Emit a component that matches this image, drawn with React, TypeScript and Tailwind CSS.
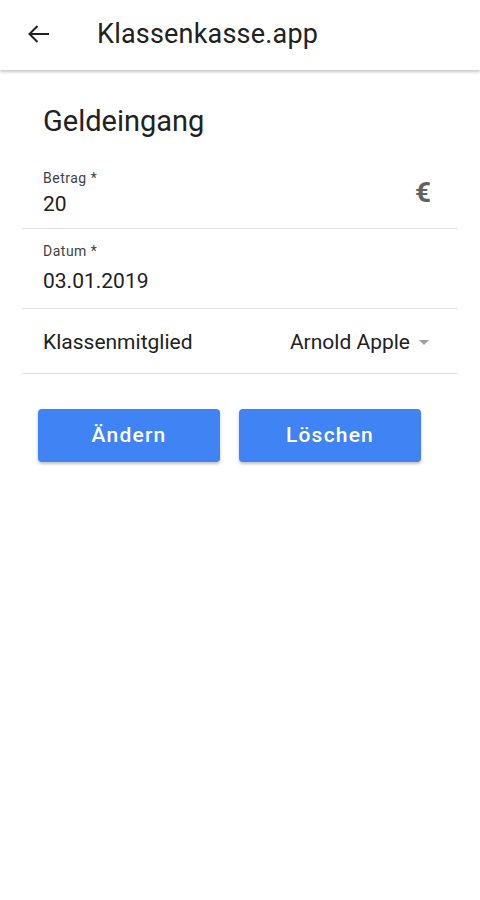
import * as React from "react";

const font = { fontFamily: "Roboto, 'Noto Sans', sans-serif" };

const BackArrow = () => (
  <svg width="22" height="20" viewBox="0 0 22 20" fill="none" stroke="#212121" strokeWidth="2">
    <path d="M22 10H2.5" />
    <path d="M10.5 2 2.5 10l8 8" />
  </svg>
);

export default function App() {
  return (
    <div className="min-h-[900px] bg-white text-[#212121]" style={font}>
      {/* App bar */}
      <header className="flex h-[70px] items-center bg-white shadow-[0_2px_3px_rgba(0,0,0,0.22)]">
        <div className="ml-[27px] -mt-[3px] flex w-[22px] items-center">
          <BackArrow />
        </div>
        <h1 className="ml-[48px] -mt-[3px] text-[27px] leading-[30px] tracking-[0.2px] text-[#212121]">Klassenkasse.app</h1>
      </header>

      <main className="px-[22px]">
        <h2 className="pt-[35px] pl-[21px] text-[29px] leading-[32px]">Geldeingang</h2>

        {/* Betrag */}
        <div className="mt-[33px] flex items-center border-b border-[#e0e0e0] pb-[12px] pl-[21px] pr-[27px]">
          <div className="flex-1">
            <p className="text-[14px] leading-[16px] tracking-[0.5px] text-[#424242]">Betrag *</p>
            <p className="mt-[6px] text-[21px] leading-[24px]">20</p>
          </div>
          <span className="text-[28px] font-bold leading-[28px] text-[#616161]">€</span>
        </div>

        {/* Datum */}
        <div className="border-b border-[#e0e0e0] pt-[14px] pb-[15px] pl-[21px]">
          <p className="text-[14px] leading-[16px] tracking-[0.5px] text-[#424242]">Datum *</p>
          <p className="mt-[10px] text-[21px] leading-[24px]">03.01.2019</p>
        </div>

        {/* Klassenmitglied */}
        <div className="flex items-center border-b border-[#e0e0e0] pt-[21px] pb-[19px] pl-[21px] pr-[29px]">
          <span className="flex-1 text-[21px] leading-[24px]">Klassenmitglied</span>
          <span className="text-[21px] leading-[24px]">Arnold Apple</span>
          <span className="ml-[9px] h-0 w-0 border-x-[5px] border-t-[5px] border-x-transparent border-t-[#9e9e9e]" />
        </div>

        {/* Buttons */}
        <div className="mt-[35px] flex gap-[19px] pl-[16px]">
          <button className="h-[53px] w-[182px] rounded-[4px] bg-[#3f83f5] text-[21px] font-medium tracking-[1.2px] text-white shadow-[0_2px_3px_rgba(0,0,0,0.25)]">
            Ändern
          </button>
          <button className="h-[53px] w-[182px] rounded-[4px] bg-[#3f83f5] text-[21px] font-medium tracking-[1.2px] text-white shadow-[0_2px_3px_rgba(0,0,0,0.25)]">
            Löschen
          </button>
        </div>
      </main>
    </div>
  );
}
